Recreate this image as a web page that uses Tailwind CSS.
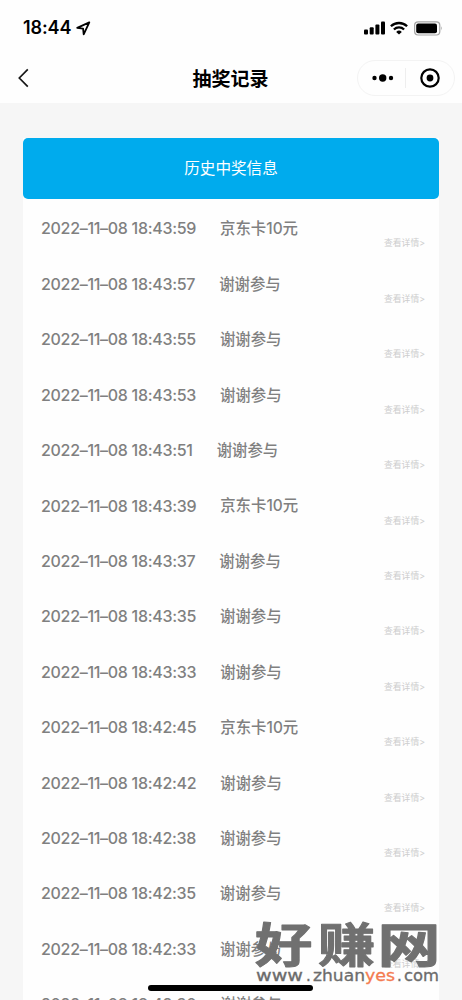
<!DOCTYPE html>
<html lang="zh-CN">
<head>
<meta charset="utf-8">
<title>抽奖记录</title>
<script src="https://cdn.jsdelivr.net/npm/@tailwindcss/browser@4"></script>
</head>
<body class="bg-[#f6f6f6]">
<div class="relative flex h-[1000px] w-[462px] flex-col overflow-hidden bg-[#f6f6f6] font-['Inter','Noto_Sans_CJK_SC',sans-serif]">
  <header class="h-[103px] shrink-0 bg-[#fefefe] text-black">
    <div class="flex h-[56px] items-center pl-[23px] pr-[19px]">
      <span class="text-[18px] font-semibold leading-none tracking-[-0.1px]">18:44</span>
      <svg class="ml-[5px]" width="15" height="15" viewBox="0 0 15 15" fill="none" stroke="black" stroke-width="1.8" stroke-linejoin="round"><path d="M13.3 1.4 1.2 6.9l5.9.7.6 5.8z"/></svg>
      <div class="ml-auto flex items-center">
        <svg width="21" height="14" viewBox="0 0 21 14"><rect x="0" y="8.5" width="4" height="5" rx="1"/><rect x="5.7" y="6.3" width="4" height="7.2" rx="1"/><rect x="11.4" y="3.5" width="4" height="10" rx="1"/><rect x="17" y="0.5" width="4" height="13" rx="1"/></svg>
        <svg class="ml-[5px]" width="18" height="14" viewBox="0 0 18 14" fill="none" stroke="black" stroke-width="2.3"><path d="M.9 5.3a11.6 11.6 0 0 1 16.2 0M3.9 8.5a7.2 7.2 0 0 1 10.2 0"/><path d="M9 13.5 6.2 10.9a4 4 0 0 1 5.6 0z" fill="black" stroke="none"/></svg>
        <svg class="ml-[6px]" width="29" height="15" viewBox="0 0 29 15"><rect x=".6" y=".8" width="25.2" height="13.2" rx="3.5" fill="none" stroke="#a5a5a5" stroke-width="1.2"/><rect x="2.2" y="2.5" width="20.8" height="9.8" rx="2"/><path d="M27.2 5.2q1.7 2.2 0 4.4z" fill="#999"/></svg>
      </div>
    </div>
    <div class="grid h-[44px] grid-cols-[1fr_auto_1fr] items-center pl-[17px] pr-[18px]">
      <svg width="13" height="20" viewBox="0 0 13 20" fill="none" stroke="#171717" stroke-width="1.7"><path d="M10.8 1.4 2.3 10l8.5 8.6"/></svg>
      <h1 class="pt-[2px] text-[19px] font-bold leading-none">抽奖记录</h1>
      <div class="-mr-[11px] flex h-[36px] w-[98px] items-center justify-self-end rounded-full border border-[#f3f3f3]">
        <svg width="96" height="34" viewBox="0 0 96 34"><circle cx="16.5" cy="17" r="2.2"/><circle cx="24.7" cy="17" r="3.7"/><circle cx="33" cy="17" r="2.2"/><path d="M47.5 7v20" stroke="#eee"/><circle cx="72" cy="17" r="8.7" fill="none" stroke="black" stroke-width="2.2"/><circle cx="72" cy="17" r="3.4"/></svg>
      </div>
    </div>
  </header>
  <main class="mx-[23px] mt-[35px] h-[862px] shrink-0 overflow-hidden bg-[#fefefe]">
    <h2 class="flex h-[61px] items-center justify-center rounded-[5px] bg-[#00abed] pt-px text-[15.6px] leading-none text-white">历史中奖信息</h2>
    <ul id="rows" class="text-[#808080]"></ul>
  </main>
  <div class="absolute bottom-[9px] left-[148px] h-[6px] w-[165px] rounded-full bg-black"></div>
  <svg class="absolute left-[250px] top-[910px]" width="200" height="80" viewBox="0 0 200 80">
    <g class="fill-[#707070] stroke-[#707070] font-['Noto_Sans_CJK_SC',sans-serif] text-[47px] font-bold" stroke-width="1" stroke-linejoin="round">
      <text transform="translate(5 52) scale(1.22 1)">好</text>
      <text transform="translate(68 52) scale(1.22 1)">赚</text>
      <text transform="translate(127.5 52) scale(1.34 1)">网</text>
    </g>
    <g class="fill-[#6c6c6c] stroke-[#6c6c6c] font-['DejaVu_Sans',sans-serif] text-[15px]" stroke-width=".3">
      <text x="6" y="71" textLength="47" lengthAdjust="spacingAndGlyphs">www</text>
      <text x="56" y="71">.</text>
      <text x="63" y="71" textLength="52" lengthAdjust="spacingAndGlyphs">zhuan</text>
      <text x="115" y="71" textLength="30" lengthAdjust="spacingAndGlyphs" class="fill-[#f47b50] stroke-[#f47b50]">yes</text>
      <text x="147" y="71">.</text>
      <text x="154" y="71" textLength="35" lengthAdjust="spacingAndGlyphs">com</text>
    </g>
  </svg>
</div>
<template id="row">
  <li class="flex h-[55.43px] pl-[18px] pr-[14px]">
    <span class="mt-[19.4px] text-[16px] font-medium leading-[20px] tracking-[-0.3px]"></span>
    <span class="ml-[24px] mt-[20.3px] text-[15.4px] font-medium leading-[20px]"></span>
    <span class="ml-auto mt-[38.4px] text-[8.8px] leading-[12px] text-[#cdcdcd]">查看详情&gt;</span>
  </li>
</template>
<script>
const rows = [['18:43:59',1],['18:43:57',0],['18:43:55',0],['18:43:53',0],['18:43:51',0],['18:43:39',1],['18:43:37',0],['18:43:35',0],['18:43:33',0],['18:42:45',1],['18:42:42',0],['18:42:38',0],['18:42:35',0],['18:42:33',0],['18:42:30',0]];
const list = document.getElementById('rows');
for (const [time, won] of rows) {
  const item = document.getElementById('row').content.cloneNode(true);
  const cells = item.querySelectorAll('span');
  cells[0].textContent = '2022–11–08 ' + time;
  cells[1].textContent = won ? '京东卡10元' : '谢谢参与';
  list.append(item);
}
</script>
</body>
</html>
